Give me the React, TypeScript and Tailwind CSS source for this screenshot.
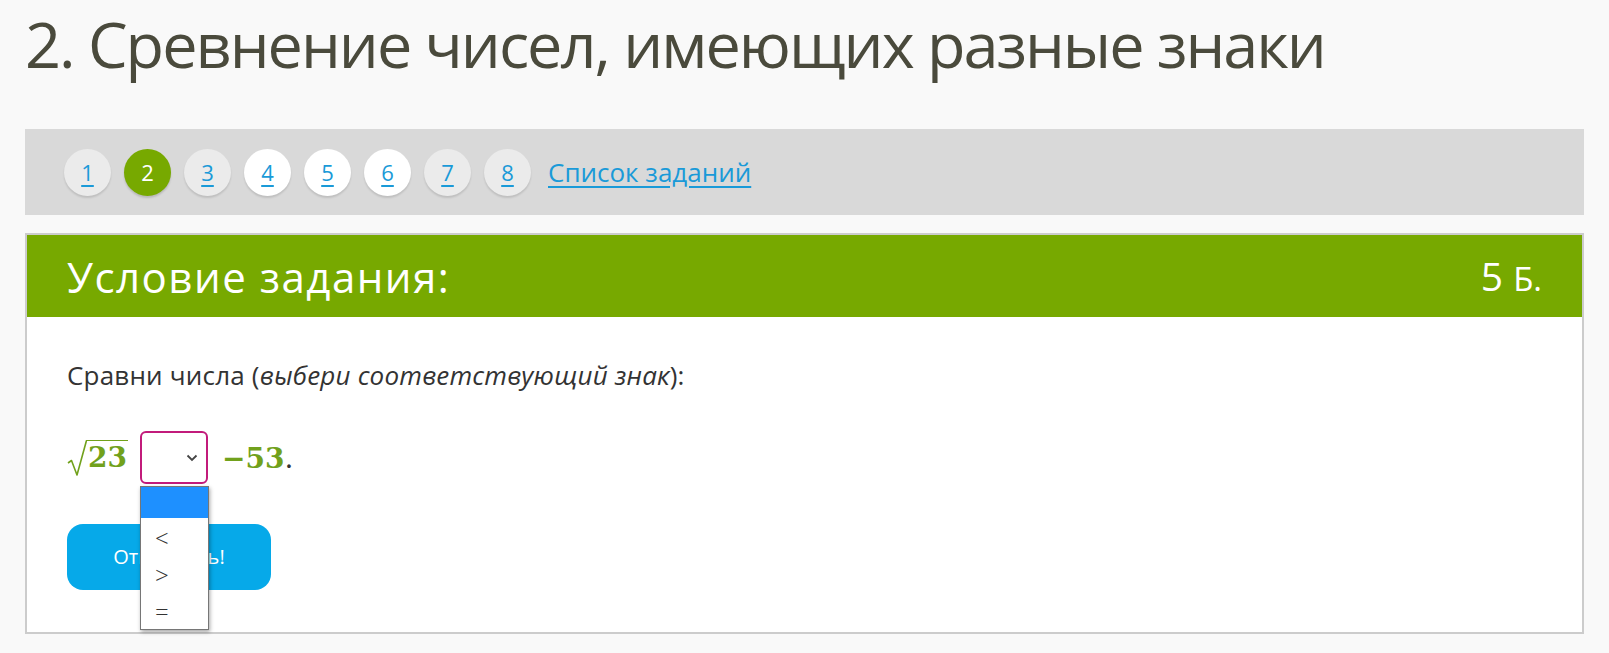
import React from "react";

const tasks = [
  { n: 1, state: "visited" },
  { n: 2, state: "current" },
  { n: 3, state: "visited" },
  { n: 4, state: "new" },
  { n: 5, state: "new" },
  { n: 6, state: "new" },
  { n: 7, state: "visited" },
  { n: 8, state: "visited" },
];

const TaskCircle = ({ n, state }: { n: number; state: string }) => {
  if (state === "current") {
    return (
      <div className="flex h-[47px] w-[47px] items-center justify-center rounded-full bg-[#77a900] text-[22px] text-white shadow-[0_2px_2px_rgba(0,0,0,0.15)]">
        {n}
      </div>
    );
  }
  return (
    <div
      className={
        state === "new"
          ? "flex h-[47px] w-[47px] items-center justify-center rounded-full bg-white shadow-[0_2px_2px_rgba(0,0,0,0.12)]"
          : "flex h-[47px] w-[47px] items-center justify-center rounded-full bg-[#ebebeb] shadow-[0_2px_2px_rgba(0,0,0,0.12)]"
      }
    >
      <a href="#" className="text-[22px] text-[#1a9ad8] underline underline-offset-4">
        {n}
      </a>
    </div>
  );
};

const App = () => {
  return (
    <div className="min-h-screen bg-[#f9f9f9] font-['Open_Sans',sans-serif]">
      <div className="px-[25px]">
        <h1 className="text-[63px] leading-[88px] tracking-[-2px] text-[#4a4a3c]">
          2. Сревнение чисел, имеющих разные знаки
        </h1>

        <div className="mt-[41px] flex h-[86px] items-center gap-[13px] bg-[#d9d9d9] pl-[39px]">
          {tasks.map((t) => (
            <TaskCircle key={t.n} n={t.n} state={t.state} />
          ))}
          <a href="#" className="ml-[4px] text-[26px] text-[#1a9ad8] underline underline-offset-4">
            Список заданий
          </a>
        </div>

        <div className="mt-[18px] border-2 border-[#cccccc] bg-white">
          <div className="flex h-[82px] items-center justify-between bg-[#77a900] px-[40px] text-white">
            <span className="text-[42px] tracking-[1.5px]">Условие задания:</span>
            <span className="text-[39px]">
              5 <span className="text-[33px]">Б.</span>
            </span>
          </div>

          <div className="px-[40px] pt-[40px] pb-[42px]">
            <p className="text-[26px] leading-[36px] tracking-[0.2px] text-[#333333]">
              Сравни числа (<i>выбери соответствующий знак</i>):
            </p>

            <div className="mt-[36px] flex items-start">
              <span className="mt-[10px] flex items-start text-[#71a11c]">
                <svg width="20" height="38" viewBox="0 0 20 38" fill="none" stroke="#71a11c" strokeWidth="1.6" strokeLinejoin="round">
                  <path d="M1 24 L4.5 21.5 L10 36 L19.5 1.5" />
                </svg>
                <span className="-ml-[1px] mt-[1px] border-t-[1.6px] border-[#71a11c] pr-[1px] pl-[2px] font-['DejaVu_Serif',serif] text-[28px] font-bold leading-[34px]">
                  23
                </span>
              </span>

              <div className="relative ml-[12px] mt-[2px]">
                <div className="flex h-[53px] w-[68px] items-center justify-end rounded-[6px] border-2 border-[#c21b7b] bg-white pr-[8px]">
                  <svg width="12" height="8" viewBox="0 0 12 8" fill="none" stroke="#444" strokeWidth="1.8">
                    <path d="M1.5 1.5 L6 6 L10.5 1.5" />
                  </svg>
                </div>
                <div className="absolute left-0 top-[55px] z-10 w-[69px] border border-[#767676] bg-white shadow-[1px_2px_4px_rgba(0,0,0,0.35)]">
                  <div className="h-[31px] bg-[#1e90ff]" />
                  <div className="flex h-[37px] items-center pl-[14px] pt-[3px] text-[24px] font-light text-[#333]">&lt;</div>
                  <div className="flex h-[37px] items-center pl-[14px] pt-[3px] text-[24px] font-light text-[#333]">&gt;</div>
                  <div className="flex h-[37px] items-center pl-[14px] pt-[3px] text-[24px] font-light text-[#333]">=</div>
                </div>
              </div>

              <span className="ml-[14px] mt-[9px] font-['DejaVu_Serif',serif] text-[28px] font-bold text-[#71a11c]">
                −53<span className="font-normal text-[#333]">.</span>
              </span>
            </div>

            <button className="mt-[40px] h-[66px] w-[204px] rounded-[16px] bg-[#06a9e9] text-[20px] text-white">
              Отправить!
            </button>
          </div>
        </div>
      </div>
    </div>
  );
};

export default App;
